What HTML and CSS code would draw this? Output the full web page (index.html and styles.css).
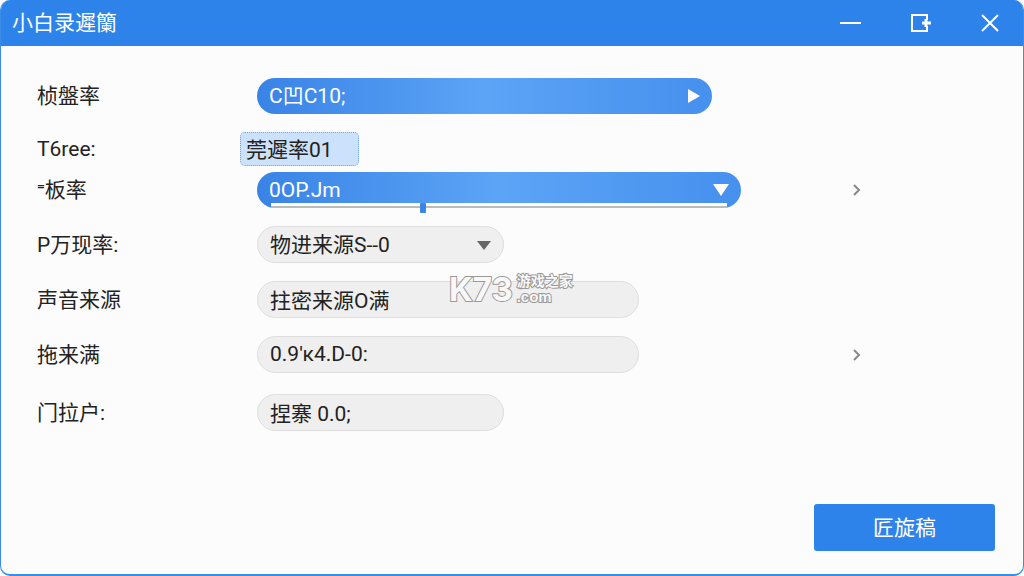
FILE: index.html
```html
<!DOCTYPE html>
<html lang="zh-CN">
<head>
    <meta charset="UTF-8">
    <meta name="viewport" content="width=device-width, initial-scale=1.0">
    <title>小白录遲籣</title>
    <link rel="stylesheet" href="styles.css">
</head>
<body>
    <div class="window">
        <header class="titlebar">
            <h1>小白录遲籣</h1>
            <div class="window-buttons">
                <button type="button" aria-label="最小化">
                    <svg width="24" height="24" viewBox="0 0 24 24"><path d="M1 12h21"/></svg>
                </button>
                <button type="button" aria-label="还原">
                    <svg width="24" height="24" viewBox="0 0 24 24"><path d="M18 9V4H3v16h15v-5"/><path d="M13 12h9" stroke-width="3"/><path d="M17 8v8" stroke-width="3"/></svg>
                </button>
                <button type="button" aria-label="关闭">
                    <svg width="24" height="24" viewBox="0 0 24 24"><path d="M3 4l16 16M19 4L3 20"/></svg>
                </button>
            </div>
        </header>
        <main>
            <form class="settings">
                <div class="row">
                    <label for="quality">桢盤率</label>
                    <div class="control">
                        <select id="quality" class="field blue"><option>C凹C10;</option></select>
                        <svg class="arrow" width="16" height="16" viewBox="0 0 16 16"><path d="M2 1l12 7-12 7z"/></svg>
                    </div>
                </div>
                <div class="row tight">
                    <label for="three">T6ree:</label>
                    <div class="control">
                        <input id="three" class="highlight" type="text" value="莞遲率01">
                    </div>
                </div>
                <div class="row">
                    <label for="rate">⁼板率</label>
                    <div class="control">
                        <select id="rate" class="field blue wide"><option>0OP.Jm</option></select>
                        <svg class="arrow arrow-down" width="16" height="16" viewBox="0 0 16 16"><path d="M0 2h16L8 14z"/></svg>
                        <input class="slider" type="range" min="0" max="100" value="33" aria-label="板率">
                    </div>
                    <button type="button" class="more" aria-label="更多">
                        <svg width="10" height="12" viewBox="0 0 10 12"><path d="M2 1l5 5-5 5"/></svg>
                    </button>
                </div>
                <div class="row">
                    <label for="view">P万现率:</label>
                    <div class="control">
                        <select id="view" class="field short"><option>物进来源S--0</option></select>
                        <svg class="arrow arrow-gray" width="16" height="16" viewBox="0 0 16 16"><path d="M1 4h14l-7 9z"/></svg>
                    </div>
                </div>
                <div class="row">
                    <label for="sound">声音来源</label>
                    <div class="control">
                        <input id="sound" class="field" type="text" value="拄密来源O满">
                        <div class="watermark">
                            <span class="mark-name">K73</span>
                            <span class="mark-site"><span>游戏之家</span><span class="mark-com">.com</span></span>
                        </div>
                    </div>
                </div>
                <div class="row spaced">
                    <label for="source">拖来满</label>
                    <div class="control">
                        <input id="source" class="field" type="text" value="0.9'к4.D-0:">
                    </div>
                    <button type="button" class="more" aria-label="更多">
                        <svg width="10" height="12" viewBox="0 0 10 12"><path d="M2 1l5 5-5 5"/></svg>
                    </button>
                </div>
                <div class="row">
                    <label for="door">门拉户:</label>
                    <div class="control">
                        <input id="door" class="field short" type="text" value="捏寨 0.0;">
                    </div>
                </div>
            </form>
        </main>
        <footer>
            <button type="button" class="start">匠旋稿</button>
        </footer>
    </div>
</body>
</html>
```

FILE: styles.css
```css
* {
    box-sizing: border-box;
}
body {
    margin: 0;
    background: #fff;
    color: #222;
    font-family: Roboto, "Noto Sans CJK SC", sans-serif;
    font-size: 21px;
    line-height: 28px;
}
button, input, select {
    margin: 0;
    font: inherit;
    color: inherit;
}
button {
    padding: 0;
    border: 0;
    background: none;
    cursor: pointer;
}
svg {
    display: block;
}
.window {
    display: flex;
    flex-direction: column;
    min-height: 100vh;
    overflow: hidden;
    background: #fcfcfc;
    border: solid #3b8de8;
    border-width: 0 1px 2px;
    border-radius: 10px;
}
.titlebar {
    display: flex;
    align-items: center;
    justify-content: space-between;
    height: 46px;
    padding: 0 20px 0 11px;
    background: #2d83ea;
    color: #fff;
}
.titlebar h1 {
    margin: 0;
    font-size: 21px;
    font-weight: 400;
}
.window-buttons {
    display: flex;
    gap: 46px;
}
.window-buttons svg {
    fill: none;
    stroke: #fff;
    stroke-width: 2;
}
.settings {
    padding: 32px 28px 0 36px;
}
.row {
    display: grid;
    grid-template-columns: 220px minmax(0, 590px) auto;
    align-items: center;
    margin-bottom: 18px;
}
.row.tight {
    margin-bottom: 6px;
}
.row.spaced {
    margin-bottom: 21px;
}
.control {
    position: relative;
    display: flex;
    align-items: center;
}
.field {
    width: 382px;
    max-width: 100%;
    height: 37px;
    padding: 0 12px;
    border: 1px solid #dedede;
    border-radius: 19px;
    background: #efefef;
    appearance: none;
    outline: none;
}
input.field {
    padding-bottom: 2px;
}
.field.short {
    width: 247px;
}
.field.blue {
    width: 455px;
    height: 36px;
    border: 0;
    background: linear-gradient(90deg, #3983e6, #5ca4f6 50%, #4690ee);
    color: #fff;
}
.field.wide {
    width: 484px;
}
.highlight {
    width: 119px;
    height: 34px;
    margin-left: -17px;
    padding: 0 5px 3px;
    border: 1px dotted #69a5e4;
    border-radius: 5px;
    background: #cce1fb;
    outline: none;
}
.arrow {
    margin-left: -26px;
    fill: #fff;
    pointer-events: none;
}
.arrow-down {
    margin-left: -28px;
}
.arrow-gray {
    margin-left: -28px;
    fill: #666;
}
/* track runs along the lower edge of the drop-down */
.slider {
    position: absolute;
    left: 14px;
    bottom: 0;
    width: 456px;
    height: 5px;
    appearance: none;
    background: none;
}
.slider::-webkit-slider-runnable-track {
    height: 5px;
    border-bottom: 2px solid #bbb;
    background: #fff;
}
.slider::-webkit-slider-thumb {
    appearance: none;
    width: 6px;
    height: 10px;
    border-radius: 1px;
    background: #3b87e6;
}
.more {
    margin-left: 5px;
}
.more svg {
    fill: none;
    stroke: #888;
    stroke-width: 2;
}
.watermark {
    position: absolute;
    left: 192px;
    top: -8px;
    display: flex;
    align-items: center;
    gap: 4px;
    color: #f8f8f8;
    font-weight: 700;
    line-height: 30px;
    paint-order: stroke fill;
    -webkit-text-stroke: 2px #999;
    pointer-events: none;
}
.mark-name {
    font-family: Inter, sans-serif;
    font-size: 33px;
}
.mark-site {
    display: flex;
    flex-direction: column;
    font-size: 14px;
    line-height: 16px;
}
.mark-com {
    font-family: "Liberation Sans", sans-serif;
    font-size: 15px;
}
footer {
    display: flex;
    justify-content: flex-end;
    margin-top: auto;
    padding: 20px 28px 23px;
}
.start {
    width: 181px;
    height: 47px;
    border-radius: 3px;
    background: #2d83ea;
    color: #fff;
}
```
